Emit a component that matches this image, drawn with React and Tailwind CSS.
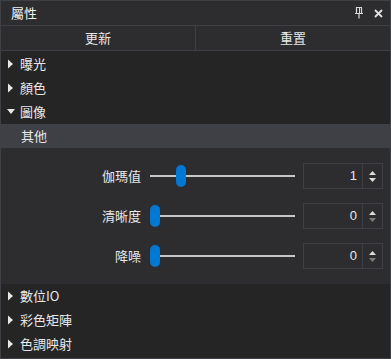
const font = { fontFamily: '"Noto Sans CJK TC", "Noto Sans", sans-serif' }

function Caret({ open }) {
  return (
    <svg width="8" height="10" viewBox="0 0 8 10" className="shrink-0">
      {open ? <path d="M0 2h8L4 7z" fill="#e8e8e8" /> : <path d="M1 0.5v9L6 5z" fill="#e8e8e8" />}
    </svg>
  )
}

function Row({ label, open, active }) {
  return (
    <div className={`flex h-6 items-center ${active ? 'bg-[#3f3f46] pl-5' : 'pl-[6px] gap-[5px]'}`}>
      {!active && <Caret open={open} />}
      <span className="text-[13px] text-[#e8e8e8]">{label}</span>
    </div>
  )
}

function SliderRow({ label, pct, value, atMin }) {
  return (
    <div className="flex h-[26px] items-center">
      <div className="w-[140px] text-right text-[13px] text-[#e8e8e8]">{label}</div>
      <div className="relative ml-[9px] h-[22px] w-[145px]">
        <div className="absolute left-0 right-0 top-[10px] h-[2px] bg-[#c6c6c6]" />
        <div
          className="absolute top-0 h-[22px] w-[10px] rounded-full bg-[#0078d4]"
          style={{ left: `${pct}%` }}
        />
      </div>
      <div className="ml-[8px] flex h-[26px] w-[80px] border border-[#3f3f46]">
        <div className="flex flex-1 items-center justify-end pr-[5px] text-[13px] text-[#e8e8e8]" style={{ fontFamily: '"Liberation Sans", sans-serif' }}>
          {value}
        </div>
        <div className="flex w-[20px] flex-col items-center justify-center gap-[3px] border-l border-[#3f3f46]">
          <svg width="7" height="4" viewBox="0 0 7 4"><path d="M0 4h7L3.5 0z" fill="#dcdcdc" /></svg>
          <svg width="7" height="4" viewBox="0 0 7 4"><path d="M0 0h7L3.5 4z" fill={atMin ? '#7a7a7a' : '#dcdcdc'} /></svg>
        </div>
      </div>
    </div>
  )
}

export default function App() {
  return (
    <div className="h-[359px] w-[391px] overflow-hidden border border-[#3f3f46] bg-[#252526]" style={font}>
      <div className="flex h-[25px] items-center justify-between border-b border-[#3f3f46] bg-[#2d2d30] pl-[10px] pr-[7px]">
        <span className="text-[13px] text-[#f0f0f0]">屬性</span>
        <div className="flex items-center gap-[11px]">
          <svg width="8" height="12" viewBox="0 0 8 12">
            <path d="M1.5 0.5h5v6h-5z M0 6.5h8" fill="none" stroke="#d8d8d8" strokeWidth="1.2" />
            <path d="M4 7v4.5" stroke="#d8d8d8" strokeWidth="1.2" />
            <path d="M4.5 1v5" stroke="#d8d8d8" strokeWidth="1" />
          </svg>
          <svg width="9" height="9" viewBox="0 0 9 9">
            <path d="M1 1l7 7M8 1L1 8" stroke="#e0e0e0" strokeWidth="1.8" />
          </svg>
        </div>
      </div>
      <div className="flex h-[25px] border-b border-[#3f3f46] bg-[#2d2d30] text-[13px] text-[#e8e8e8]">
        <div className="flex w-[195px] items-center justify-center border-r border-[#3f3f46]">更新</div>
        <div className="flex flex-1 items-center justify-center">重置</div>
      </div>
      <div className="pt-[1px]">
        <Row label="曝光" />
        <Row label="顏色" />
        <Row label="圖像" open />
        <Row label="其他" active />
      </div>
      <div className="flex h-[136px] flex-col gap-[14px] bg-[#2d2d30] pt-[15px]">
        <SliderRow label="伽瑪值" pct={18} value="1" />
        <SliderRow label="清晰度" pct={0} value="0" atMin />
        <SliderRow label="降噪" pct={0} value="0" atMin />
      </div>
      <div>
        <Row label="數位IO" />
        <Row label="彩色矩陣" />
        <Row label="色調映射" />
      </div>
    </div>
  )
}
